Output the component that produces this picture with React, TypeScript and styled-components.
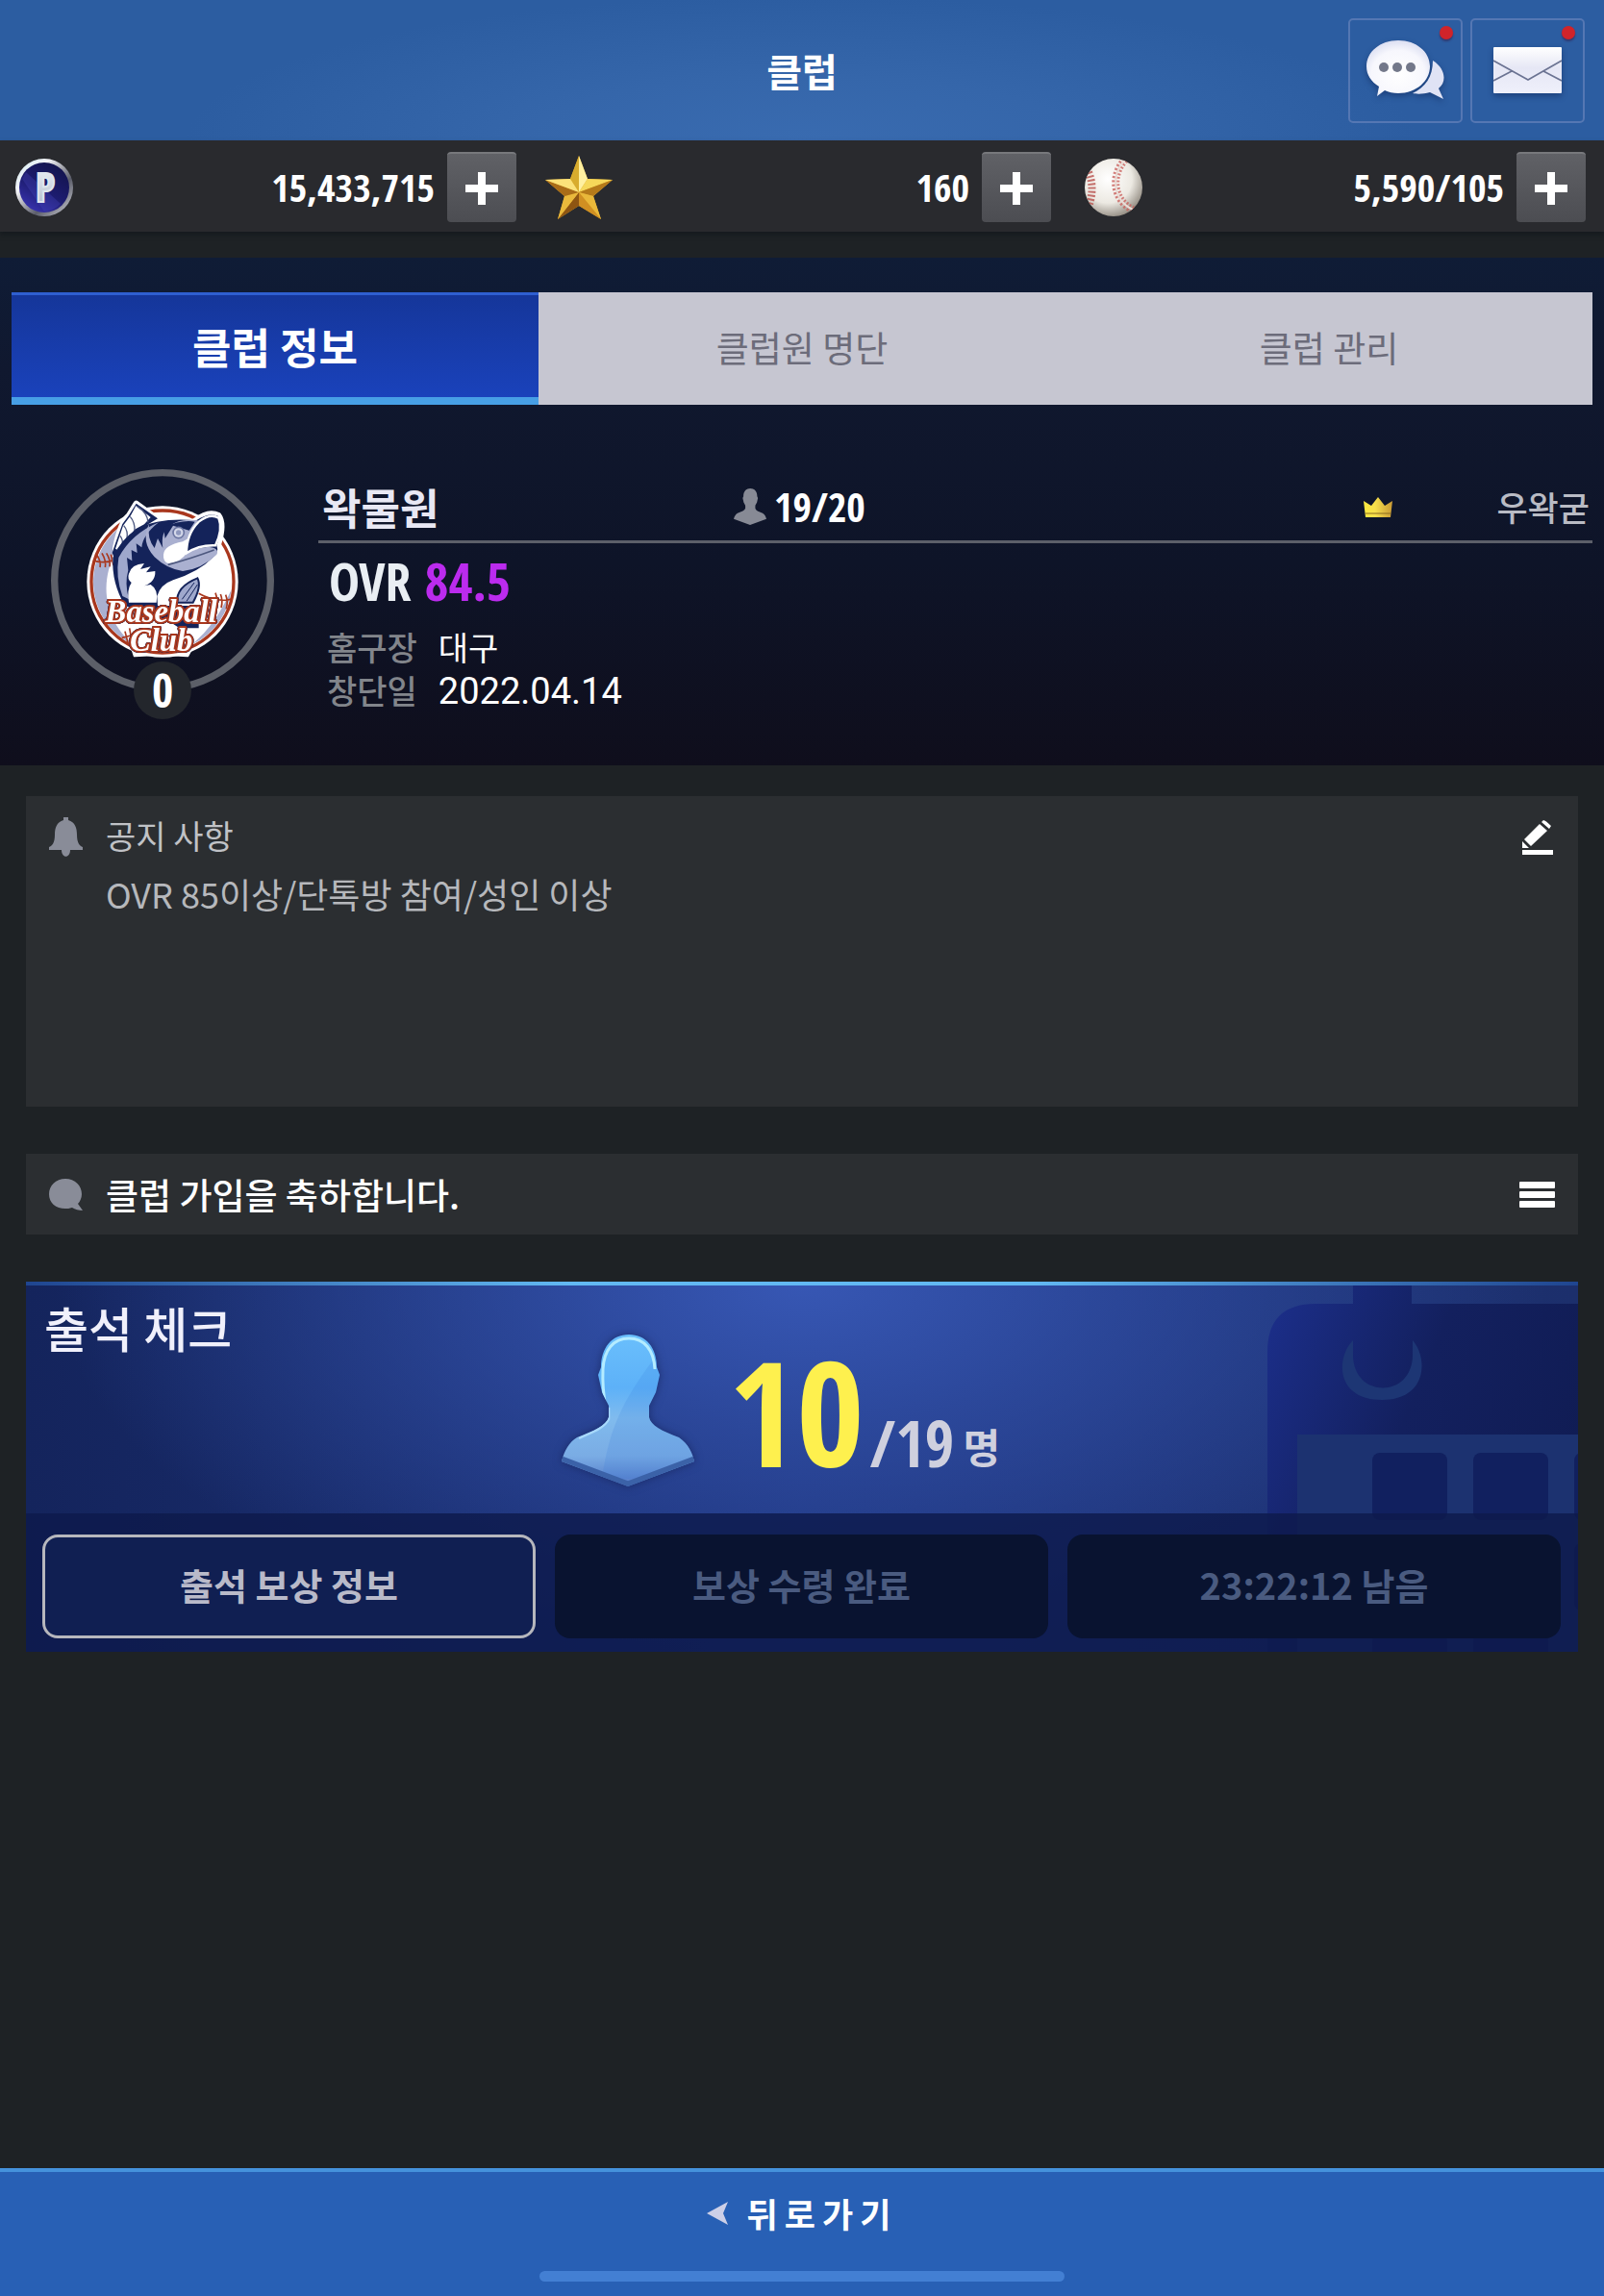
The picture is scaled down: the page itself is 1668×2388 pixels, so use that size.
import React from 'react';
import styled, { createGlobalStyle, css } from 'styled-components';

const sans = `'Noto Sans CJK KR', 'Noto Sans', sans-serif`;
const narrow = `'Open Sans Condensed', 'Roboto Condensed', 'Noto Sans CJK KR', sans-serif`;

const GlobalStyle = createGlobalStyle`
  *, *::before, *::after { box-sizing: border-box; }
  body { margin: 0; background: #1e2225; font-family: ${sans}; color: #fff; }
  button { font: inherit; color: inherit; border: 0; padding: 0; background: none; cursor: pointer; }
  h1, h2, p, dl, dd, dt { margin: 0; font-weight: inherit; }
  svg { display: block; flex: none; }
`;

const Page = styled.div`
  min-height: 100vh;
  display: flex;
  flex-direction: column;
`;

/* ---------- header ---------- */

const Header = styled.header`
  height: 146px;
  display: grid;
  grid-template-columns: 1fr auto 1fr;
  align-items: center;
  padding: 0 20px;
  background: radial-gradient(ellipse 640px 150px at 50% 100%, #396bb0 0%, #3566aa 45%, #2c5da1 100%);
`;

const Title = styled.h1`
  grid-column: 2;
  font-size: 40px;
  line-height: 56px;
  font-weight: 700;
`;

const HeaderActions = styled.nav`
  display: flex;
  justify-content: flex-end;
  gap: 8px;
`;

const IconButton = styled.button`
  position: relative;
  width: 119px;
  height: 109px;
  display: grid;
  place-items: center;
  border: 2px solid #5577b3;
  border-radius: 5px;
  svg { filter: drop-shadow(0 3px 3px rgba(10, 30, 80, 0.45)); }
`;

const Dot = styled.span`
  position: absolute;
  top: 6px;
  right: 8px;
  width: 14px;
  height: 14px;
  border-radius: 50%;
  background: #d0242a;
  box-shadow: 0 2px 2px rgba(60, 20, 60, 0.5);
`;

/* ---------- resources ---------- */

const Resources = styled.section`
  height: 95px;
  display: grid;
  grid-template-columns: repeat(3, 1fr);
  background: #292a2e;
  box-shadow: 0 3px 5px rgba(12, 18, 24, 0.5);
`;

const Resource = styled.div`
  display: flex;
  align-items: center;
  padding: 2px 19px 0 11px;
`;

const Amount = styled.span`
  flex: 1;
  padding-right: 13px;
  text-align: right;
  font: 700 40px/48px ${narrow};
`;

const PlusButton = styled.button`
  width: 72px;
  height: 73px;
  display: grid;
  place-items: center;
  border-radius: 4px;
  border-top: 2px solid #77787c;
  background: linear-gradient(#606166, #4c4d52);
`;

/* ---------- club summary ---------- */

const Summary = styled.section`
  margin-top: 27px;
  padding: 36px 12px 56px;
  background: linear-gradient(#0f1c36 0%, #10182f 22%, #0e1428 60%, #0f0e1c 100%);
`;

const Tabs = styled.div`
  display: grid;
  grid-template-columns: repeat(3, 1fr);
  background: #c6c6d1;
`;

const Tab = styled.button<{ $active?: boolean }>`
  height: 117px;
  padding-bottom: 4px;
  font-size: 37px;
  line-height: 48px;
  color: #6c6c7a;
  font-weight: 400;
  ${(p) =>
    p.$active &&
    css`
      padding-bottom: 0;
      font-size: 44px;
      font-weight: 700;
      color: #fff;
      border-top: 3px solid #2f5fd0;
      border-bottom: 8px solid #479fe6;
      background: linear-gradient(#15369a, #1a42bb);
    `}
`;

const Club = styled.div`
  display: flex;
  gap: 46px;
  padding: 67px 0 0 41px;
`;

const CrestBox = styled.div`
  position: relative;
  flex: none;
  width: 232px;
  height: 232px;
`;

const Level = styled.span`
  position: absolute;
  left: 86px;
  top: 200px;
  width: 60px;
  height: 60px;
  border-radius: 50%;
  background: #23262c;
  text-align: center;
  font: 700 48px/60px ${narrow};
`;

const ClubInfo = styled.div`
  flex: 1;
  min-width: 0;
`;

const ClubHead = styled.div`
  display: grid;
  grid-template-columns: 428px 1fr auto;
  align-items: center;
  height: 77px;
  border-bottom: 3px solid #5c5f69;
  padding: 4px 3px 0 4px;
`;

const ClubName = styled.h2`
  font-size: 44px;
  line-height: 56px;
  font-weight: 700;
  color: #e8e8f4;
`;

const Members = styled.span`
  display: flex;
  align-items: center;
  gap: 8px;
  font: 700 42px/52px ${narrow};
`;

const Owner = styled.span`
  display: flex;
  align-items: center;
  gap: 108px;
  font-size: 35px;
  line-height: 48px;
  font-weight: 500;
  color: #b9bbc4;
`;

const Ovr = styled.p`
  display: flex;
  gap: 14px;
  padding: 3px 0 0 11px;
  font: 700 54px/72px ${narrow};
  color: #e9eef3;
`;

const OvrValue = styled.strong`
  color: #bb2bee;
`;

const Facts = styled.dl`
  display: grid;
  grid-template-columns: auto 1fr;
  grid-auto-rows: 45px;
  align-items: baseline;
  column-gap: 22px;
  padding: 10px 0 0 9px;
  font-size: 34px;
  line-height: 45px;
  dt { color: #82858b; font-weight: 500; }
`;

const DateValue = styled.dd`
  font-family: Roboto, ${sans};
  font-size: 38px;
`;

/* ---------- panels ---------- */

const Panels = styled.main`
  display: flex;
  flex-direction: column;
  padding: 32px 27px 0;
`;

const Panel = styled.section`
  display: grid;
  grid-template-columns: 35px 1fr auto;
  column-gap: 24px;
  padding: 0 24px;
  background: #2b2e31;
`;

const Notice = styled(Panel)`
  min-height: 323px;
  align-content: start;
  padding-top: 15px;
  row-gap: 4px;
`;

const NoticeTitle = styled.h2`
  font-size: 34px;
  line-height: 52px;
  color: #c0c2c6;
`;

const NoticeText = styled.p`
  grid-column: 2;
  font-size: 36px;
  line-height: 52px;
  color: #b6b8bc;
`;

const Message = styled(Panel)`
  margin-top: 49px;
  height: 84px;
  align-items: center;
`;

const MessageText = styled.p`
  font-size: 37px;
  line-height: 52px;
  font-weight: 500;
`;

const PanelButton = styled.button`
  width: 37px;
  height: 56px;
  display: grid;
  place-items: center;
`;

/* ---------- attendance ---------- */

const Attendance = styled.section`
  position: relative;
  margin-top: 49px;
  overflow: hidden;
  background:
    radial-gradient(ellipse 48% 100% at 50% 0%, #3757b4 0%, rgba(50, 80, 168, 0.7) 40%, rgba(40, 66, 140, 0) 100%),
    linear-gradient(90deg, #14245c, #1d347c 50%, #1c2f6c);
`;

const TopLine = styled.div`
  height: 4px;
  background: linear-gradient(90deg, #1f4590, #62b8f2 35%, #62b8f2 65%, #1f4590);
`;

const CalendarArt = styled.svg`
  position: absolute;
  top: 4px;
  right: 0;
`;

const AttendanceTop = styled.div`
  position: relative;
  height: 237px;
  display: grid;
  grid-template-columns: 34.5% auto;
  justify-content: start;
`;

const AttendanceTitle = styled.h2`
  padding: 5px 0 0 19px;
  font-size: 50px;
  line-height: 76px;
  font-weight: 500;
  color: #f0f0fb;
`;

const Tally = styled.div`
  display: flex;
  align-items: flex-end;
  padding-bottom: 26px;
  svg { filter: drop-shadow(0 0 5px rgba(16, 28, 80, 0.6)); }
`;

const Present = styled.strong`
  padding: 0 6px 0 36px;
  font: 700 152px/160px ${narrow};
  color: #fef04e;
`;

const Total = styled.span`
  font: 700 66px/80px ${narrow};
  color: #cfd0de;
  margin-bottom: 8px;
`;

const Unit = styled.span`
  padding-left: 9px;
  font-size: 42px;
  line-height: 56px;
  font-weight: 700;
  color: #cfd0de;
  margin-bottom: 16px;
`;

const AttendanceActions = styled.div`
  position: relative;
  display: grid;
  grid-template-columns: repeat(3, 1fr);
  gap: 20px;
  padding: 22px 18px 14px 17px;
  background: rgba(14, 26, 76, 0.82);
`;

const ActionButton = styled.button`
  height: 108px;
  padding-bottom: 4px;
  border: 3px solid #b6b7bd;
  border-radius: 16px;
  background: #101f52;
  font-size: 38px;
  line-height: 48px;
  font-weight: 700;
  color: #b9bac9;
  &:disabled {
    border-color: transparent;
    background: #091330;
    color: #4a5b80;
    cursor: default;
  }
`;

/* ---------- footer ---------- */

const Footer = styled.footer`
  margin-top: auto;
  height: 133px;
  display: flex;
  flex-direction: column;
  align-items: center;
  justify-content: space-between;
  padding: 15px 0;
  border-top: 4px solid #4592dc;
  background: #2860b5;
`;

const BackButton = styled.button`
  display: flex;
  align-items: center;
  gap: 20px;
  font-size: 35px;
  line-height: 56px;
  font-weight: 700;
  letter-spacing: 7px;
`;

const HomeBar = styled.div`
  width: 546px;
  max-width: 60%;
  height: 11px;
  border-radius: 6px;
  background: #437fd3;
`;

/* ---------- icons ---------- */

const bustPath =
  'M70 0C88 0 99 14 99 34L102 42L98 60L91 74V86C93 95 104 100 122 107C132 114 136 123 138 132L69 158L0 132C3 120 8 112 16 107C34 100 46 95 49 86V74L42 60L38 42L41 34C41 14 52 0 70 0Z';

const ChatIcon = () => (
  <svg width="82" height="62" viewBox="0 0 82 62" aria-hidden="true">
    <defs>
      <radialGradient id="bubble" cx=".5" cy=".6" r=".6">
        <stop offset="0" stopColor="#fff" />
        <stop offset=".7" stopColor="#f7f7fd" />
        <stop offset="1" stopColor="#dcdff2" />
      </radialGradient>
    </defs>
    <path d="M69 21C82 29 84 43 75 50L80 61L66 54C59 56 52 56 48 55C61 49 69 38 69 21Z" fill="#e0e3f5" />
    <path d="M33 0C52 0 66 12 66 27S52 55 33 55C28 55 23 54 19 52L11 58L13 48C5 43 0 36 0 27C0 12 14 0 33 0Z" fill="url(#bubble)" />
    <circle cx="18" cy="28" r="5" fill="#73788a" />
    <circle cx="32" cy="28" r="5" fill="#73788a" />
    <circle cx="46" cy="28" r="5" fill="#73788a" />
  </svg>
);

const MailIcon = () => (
  <svg width="71" height="48" viewBox="0 0 71 48" aria-hidden="true">
    <defs>
      <linearGradient id="mail" x2="0" y2="1">
        <stop offset="0" stopColor="#fff" />
        <stop offset=".45" stopColor="#e6e7f5" />
        <stop offset="1" stopColor="#eff0fb" />
      </linearGradient>
    </defs>
    <rect width="71" height="48" rx="1" fill="url(#mail)" />
    <path d="M0 14L36 34L71 14M0 35L19 25M71 35L52 25" fill="none" stroke="#6b7392" strokeWidth="1.6" />
  </svg>
);

const CoinIcon = () => (
  <svg width="70" height="62" viewBox="0 0 70 62" aria-hidden="true">
    <defs>
      <linearGradient id="rim" x2="1" y2="1">
        <stop offset="0" stopColor="#cfeaf0" />
        <stop offset=".3" stopColor="#f4f4f8" />
        <stop offset=".65" stopColor="#5b5d6a" />
        <stop offset="1" stopColor="#d8d9e0" />
      </linearGradient>
      <linearGradient id="coin" x1=".8" x2=".2" y2="1">
        <stop offset="0" stopColor="#12134a" />
        <stop offset=".55" stopColor="#1d1c70" />
        <stop offset="1" stopColor="#3a35b4" />
      </linearGradient>
      <linearGradient id="pFace" x2="0" y2="1">
        <stop offset="0" stopColor="#f7f8fc" />
        <stop offset="1" stopColor="#a9b6c6" />
      </linearGradient>
    </defs>
    <circle cx="35" cy="31" r="30" fill="url(#rim)" />
    <circle cx="35" cy="31" r="26" fill="url(#coin)" />
    <path d="M16 15L52 48A25 25 0 0 1 35 56L12 22Z" fill="#4a48c0" opacity=".3" />
    <text x="36" y="46" textAnchor="middle" fontFamily="Open Sans Condensed, Roboto Condensed, sans-serif" fontWeight="700" fontSize="42" fill="url(#pFace)" stroke="#dfe6ee" strokeWidth="2">P</text>
  </svg>
);

const StarIcon = () => (
  <svg width="70" height="66" viewBox="0 0 70 66" aria-hidden="true">
    <path d="M35 0L44 24L70 25L50 42L58 66L35 52L13 66L20 42L0 25L26 24Z" fill="#d9a52c" />
    <path d="M35 0L44 24L35 38Z" fill="#fff0a0" />
    <path d="M35 0L26 24L35 38Z" fill="#d8ac2e" />
    <path d="M70 25L44 24L35 38Z" fill="#f6d85a" />
    <path d="M70 25L50 42L35 38Z" fill="#b57a1a" />
    <path d="M58 66L50 42L35 38Z" fill="#e9b83a" />
    <path d="M58 66L35 52V38Z" fill="#d08f22" />
    <path d="M13 66L35 52V38Z" fill="#8e5512" />
    <path d="M13 66L20 42L35 38Z" fill="#eab93c" />
    <path d="M0 25L20 42L35 38Z" fill="#a96c18" />
    <path d="M0 25L26 24L35 38Z" fill="#fbe27a" />
  </svg>
);

const BallIcon = () => (
  <svg width="70" height="62" viewBox="0 0 70 62" aria-hidden="true">
    <defs>
      <radialGradient id="ball" cx=".4" cy=".35" r=".7">
        <stop offset="0" stopColor="#fff" />
        <stop offset=".6" stopColor="#ece9e2" />
        <stop offset="1" stopColor="#8d867c" />
      </radialGradient>
      <clipPath id="ballClip"><circle cx="35" cy="31" r="30" /></clipPath>
    </defs>
    <circle cx="35" cy="31" r="30" fill="url(#ball)" />
    <g clipPath="url(#ballClip)" fill="none">
      <path d="M47 2C32 18 34 44 55 54" stroke="#c9605c" strokeWidth="8" strokeDasharray="2 2" opacity=".8" />
      <path d="M47 2C32 18 34 44 55 54" stroke="#e8dcd6" strokeWidth="2" />
      <path d="M9 15C14 27 13 38 10 48" stroke="#b8504c" strokeWidth="8" strokeDasharray="2 2" opacity=".8" />
    </g>
  </svg>
);

const PlusIcon = () => (
  <svg width="36" height="36" viewBox="0 0 36 36" aria-hidden="true">
    <path d="M14 1H22V14H35V22H22V35H14V22H1V14H14Z" fill="#fff" />
  </svg>
);

const MemberIcon = () => (
  <svg width="34" height="38" viewBox="0 0 138 158" preserveAspectRatio="none" aria-hidden="true">
    <path d={bustPath} fill="#878a95" />
  </svg>
);

const CrownIcon = () => (
  <svg width="30" height="21" viewBox="0 0 30 21" aria-hidden="true">
    <defs>
      <linearGradient id="crown">
        <stop offset="0" stopColor="#fbe93e" />
        <stop offset=".4" stopColor="#f8e04c" />
        <stop offset="1" stopColor="#c99a35" />
      </linearGradient>
    </defs>
    <path d="M0 4L8 9L15 0L22 9L30 4L28 21H2Z" fill="url(#crown)" />
    <path d="M2 17H28" stroke="#8a6a1c" strokeWidth="1" />
  </svg>
);

const BellIcon = () => (
  <svg width="35" height="52" viewBox="0 0 35 52" aria-hidden="true">
    <path d="M15 10V7H20V10C27 12 29 18 29 25C29 34 32 37 35 38V41H22C22 50 13 50 13 41H0V38C3 37 6 34 6 25C6 18 8 12 15 10Z" fill="#898c98" />
  </svg>
);

const SpeechIcon = () => (
  <svg width="35" height="33" viewBox="0 0 35 33" aria-hidden="true">
    <path d="M17 0C27 0 34 7 34 16C34 20 32 24 30 26L35 33C31 33 27 32 24 30C21 31 19 31 17 31C7 31 0 25 0 16S7 0 17 0Z" fill="#898c98" />
  </svg>
);

const EditIcon = () => (
  <svg width="32" height="36" viewBox="0 0 32 36" aria-hidden="true">
    <path d="M0 31H32V36H0ZM0 22L7 29H0ZM2 20L18 4L26 11L9 27ZM20 2L22 0Q24 0 30 6L28 9Z" fill="#fff" />
  </svg>
);

const MenuIcon = () => (
  <svg width="37" height="27" viewBox="0 0 37 27" aria-hidden="true">
    <g fill="#fff">
      <rect width="37" height="7" rx="1" />
      <rect y="10" width="37" height="7" rx="1" />
      <rect y="20" width="37" height="7" rx="1" />
    </g>
  </svg>
);

const BustIcon = () => (
  <svg width="138" height="160" viewBox="0 0 138 160" aria-hidden="true">
    <defs>
      <linearGradient id="bust" x2="0" y2="1">
        <stop offset="0" stopColor="#6abffc" />
        <stop offset=".35" stopColor="#5db1f8" />
        <stop offset=".55" stopColor="#80bbee" />
        <stop offset=".8" stopColor="#7aace4" />
        <stop offset="1" stopColor="#5076c6" />
      </linearGradient>
      <clipPath id="bustClip"><path d={bustPath} /></clipPath>
    </defs>
    <path d={bustPath} fill="url(#bust)" />
    <g clipPath="url(#bustClip)">
      <path d="M100 20C70 60 50 90 42 150L140 150V20Z" fill="#2f74d8" opacity=".16" />
      <path d="M0 130L69 156L138 130" fill="none" stroke="#3b62a8" strokeWidth="7" />
      <path d="M47 82C45 70 42 60 43 36C44 16 54 4 70 4S96 16 97 36" fill="none" stroke="#b4ecff" strokeWidth="3" />
      <path d="M49 76V88C44 98 30 102 18 108" fill="none" stroke="#a8d9fb" strokeWidth="2.5" />
    </g>
  </svg>
);

const Calendar = () => (
  <CalendarArt width="324" height="381" viewBox="0 0 324 381" aria-hidden="true">
    <defs>
      <linearGradient id="cal" x2="1" y2=".5">
        <stop offset="0" stopColor="#1c2f8c" />
        <stop offset=".5" stopColor="#13205e" />
        <stop offset="1" stopColor="#101c54" />
      </linearGradient>
    </defs>
    <path d="M90 0H151V19H324V155H32V381H1V69Q1 19 51 19H90Z" fill="url(#cal)" />
    <path d="M32 155H324V381H32Z" fill="#1c3270" />
    <path d="M90 57C72 75 72 119 120 119S168 75 152 57V72C152 118 90 118 90 72Z" fill="#1d3674" />
    <g fill="#11205f">
      <rect x="110" y="174" width="78" height="70" rx="8" />
      <rect x="215" y="174" width="78" height="70" rx="8" />
      <rect x="320" y="174" width="78" height="70" rx="8" />
      <rect x="110" y="268" width="78" height="70" rx="8" />
      <rect x="215" y="268" width="78" height="70" rx="8" />
      <rect x="320" y="268" width="78" height="70" rx="8" />
      <rect x="110" y="362" width="78" height="70" rx="8" />
      <rect x="215" y="362" width="78" height="70" rx="8" />
    </g>
  </CalendarArt>
);

const Lettering = styled.g`
  font: italic 700 98px 'Liberation Serif', serif;
  text-anchor: middle;
  fill: #fff;
  stroke: #a9371d;
  stroke-width: 12px;
  stroke-linejoin: round;
  paint-order: stroke;
  filter: drop-shadow(0 0 2px #14235a) drop-shadow(0 0 1px #14235a);
`;

const Crest = () => (
  <svg width="232" height="232" viewBox="39 24 696 696" role="img" aria-label="Baseball Club">
    <circle cx="387" cy="372" r="337" fill="none" stroke="#5c5f68" strokeWidth="22" />
    <circle cx="387" cy="375" r="236" fill="#fff" />
    <path d="M285 560L300 606Q387 600 465 606L490 560Z" fill="#fff" stroke="#fff" strokeWidth="8" strokeLinejoin="round" />
    <circle cx="387" cy="375" r="222" fill="#fff" stroke="#a9371d" strokeWidth="10" />
    <path d="M350 162A217 217 0 0 0 300 574C180 480 170 290 350 162Z" fill="#aab0d0" />
    <path d="M602 400A217 217 0 0 1 480 570C530 530 570 470 602 400Z" fill="#aab0d0" />
    <g fill="none" stroke="#a9371d" strokeWidth="5">
      <path d="M175 310Q210 320 240 305M182 292q14 20 10 38M198 286q14 24 10 44M212 286q14 22 10 42M226 290l8 34" />
      <path d="M500 412Q550 440 600 430M552 410q8 20 2 40M568 414q8 20 2 42M584 416q8 20 2 44M260 550l40 -10M270 530l10 40M284 520l8 44" />
    </g>
    <g stroke="#fff" strokeWidth="18" strokeLinejoin="round" fill="#fff">
      <path d="M305 131L370 178L300 225L240 310L240 270Q255 190 282 168Z" />
      <path d="M490 184Q530 152 562 168Q582 195 560 262Q566 280 548 298Q510 340 450 350L300 300Z" />
    </g>
    <path d="M305 131L372 178L310 215L250 300L240 310L230 285Q240 255 262 195L282 168Z" fill="#14235a" />
    <path d="M304 138L350 174L330 196L300 212L250 278L240 272L264 200L288 168Z" fill="#fff" />
    <path d="M308 140Q340 160 342 190M286 172Q302 190 300 218M266 200Q280 216 276 240M254 232Q264 242 262 262" fill="none" stroke="#4d587f" strokeWidth="4" />
    <path d="M232 300Q255 245 310 208Q380 174 492 184Q530 158 560 170Q578 200 556 262Q564 284 546 298Q500 345 420 370Q380 384 370 420L372 450L500 450V520H440L410 500L270 450Q228 380 232 300Z" fill="#14235a" />
    <path d="M250 300Q290 225 375 190Q325 230 322 268L305 256L308 285L290 276L292 310L276 300L280 340Q268 380 282 430L262 420Q240 360 250 300Z" fill="#9fa8cc" />
    <path d="M282 350Q290 320 330 318L318 336L350 328L336 346L364 342Q366 376 330 388L350 384Q376 400 368 440H282Q275 400 290 378Q276 366 282 350Z" fill="#fff" />
    <path d="M345 195Q318 250 362 298Q400 335 450 342Q510 335 556 290Q566 270 530 266Q490 270 462 285Q466 222 498 184Q440 176 410 200Q380 220 388 270L372 240L362 270Q338 240 345 195Z" fill="#aab0d0" />
    <path d="M390 290Q392 262 450 250L474 236L466 282Q440 318 405 318Q388 312 390 290Z" fill="#fff" />
    <path d="M390 205Q450 180 488 188L470 215L420 200L395 240Z" fill="#14235a" />
    <path d="M462 286Q462 226 500 188Q535 160 562 176Q576 212 552 262Q500 260 462 286Z" fill="#14235a" stroke="#fff" strokeWidth="7" />
    <path d="M404 322Q470 305 548 276" fill="none" stroke="#4d587f" strokeWidth="5" />
    <circle cx="437" cy="222" r="17" fill="#d5d9ea" stroke="#6c76a2" strokeWidth="5" />
    <circle cx="437" cy="222" r="8" fill="#8f98be" />
    <path d="M432 440Q430 390 496 364Q510 390 482 440Z" fill="#9fa8cc" stroke="#14235a" strokeWidth="6" />
    <path d="M448 430L486 378M462 436L496 384" stroke="#14235a" strokeWidth="3" />
    <Lettering>
      <text x="383" y="502">Baseball</text>
      <text x="383" y="592">Club</text>
    </Lettering>
  </svg>
);

const BackArrow = () => (
  <svg width="22" height="24" viewBox="0 0 22 24" aria-hidden="true">
    <path d="M0 12L22 0L17 12L22 24Z" fill="#cdd0e8" />
  </svg>
);

/* ---------- app ---------- */

const resources = [
  { label: '포인트', amount: '15,433,715', icon: <CoinIcon /> },
  { label: '스타', amount: '160', icon: <StarIcon /> },
  { label: '볼', amount: '5,590/105', icon: <BallIcon /> },
];

const tabs = ['클럽 정보', '클럽원 명단', '클럽 관리'];

export default function App() {
  const [tab, setTab] = React.useState(0);
  return (
    <Page>
      <GlobalStyle />
      <Header>
        <Title>클럽</Title>
        <HeaderActions>
          <IconButton aria-label="채팅"><ChatIcon /><Dot /></IconButton>
          <IconButton aria-label="우편함"><MailIcon /><Dot /></IconButton>
        </HeaderActions>
      </Header>

      <Resources>
        {resources.map((r) => (
          <Resource key={r.label}>
            {r.icon}
            <Amount>{r.amount}</Amount>
            <PlusButton aria-label={`${r.label} 충전`}><PlusIcon /></PlusButton>
          </Resource>
        ))}
      </Resources>

      <Summary>
        <Tabs role="tablist">
          {tabs.map((name, i) => (
            <Tab key={name} role="tab" aria-selected={i === tab} $active={i === tab} onClick={() => setTab(i)}>
              {name}
            </Tab>
          ))}
        </Tabs>
        <Club>
          <CrestBox>
            <Crest />
            <Level>0</Level>
          </CrestBox>
          <ClubInfo>
            <ClubHead>
              <ClubName>왁물원</ClubName>
              <Members><MemberIcon />19/20</Members>
              <Owner><CrownIcon />우왁굳</Owner>
            </ClubHead>
            <Ovr>OVR <OvrValue>84.5</OvrValue></Ovr>
            <Facts>
              <dt>홈구장</dt>
              <dd>대구</dd>
              <dt>창단일</dt>
              <DateValue>2022.04.14</DateValue>
            </Facts>
          </ClubInfo>
        </Club>
      </Summary>

      <Panels>
        <Notice>
          <BellIcon />
          <NoticeTitle>공지 사항</NoticeTitle>
          <PanelButton aria-label="공지 수정"><EditIcon /></PanelButton>
          <NoticeText>OVR 85이상/단톡방 참여/성인 이상</NoticeText>
        </Notice>

        <Message>
          <SpeechIcon />
          <MessageText>클럽 가입을 축하합니다.</MessageText>
          <PanelButton aria-label="메뉴"><MenuIcon /></PanelButton>
        </Message>

        <Attendance>
          <TopLine />
          <Calendar />
          <AttendanceTop>
            <AttendanceTitle>출석 체크</AttendanceTitle>
            <Tally>
              <BustIcon />
              <Present>10</Present>
              <Total>/19</Total>
              <Unit>명</Unit>
            </Tally>
          </AttendanceTop>
          <AttendanceActions>
            <ActionButton>출석 보상 정보</ActionButton>
            <ActionButton disabled>보상 수령 완료</ActionButton>
            <ActionButton disabled>23:22:12 남음</ActionButton>
          </AttendanceActions>
        </Attendance>
      </Panels>

      <Footer>
        <BackButton><BackArrow />뒤로가기</BackButton>
        <HomeBar />
      </Footer>
    </Page>
  );
}
